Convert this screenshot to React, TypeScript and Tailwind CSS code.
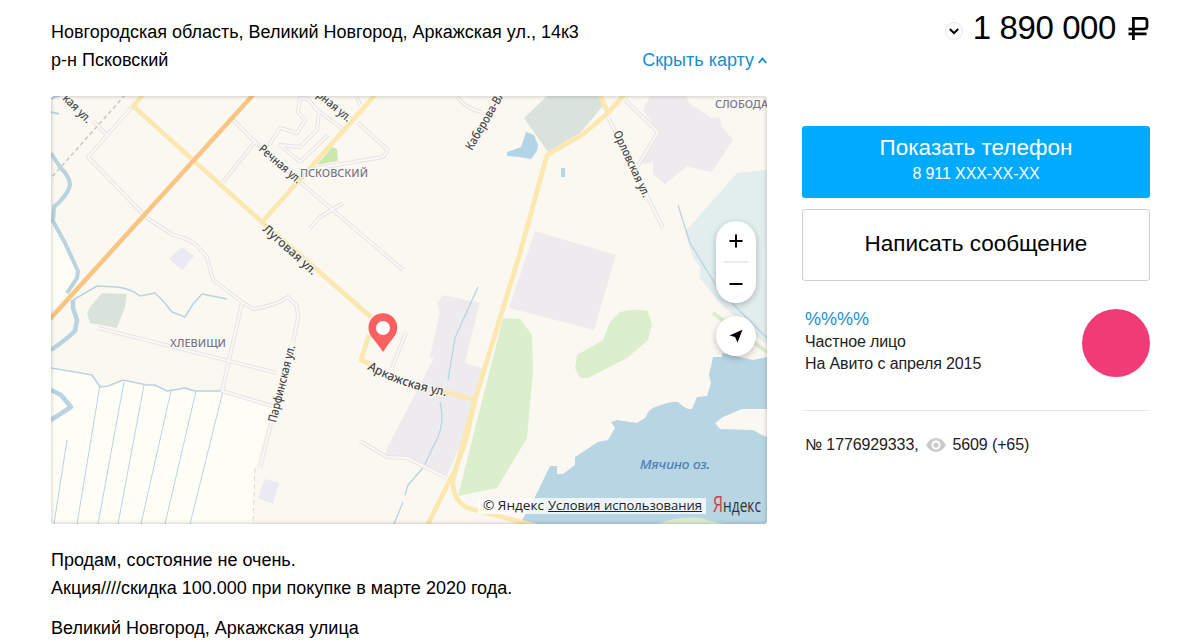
import type { ReactNode } from 'react';

const fieldDitches = [
  'M67 440 54 524',
  'M100 385 77 524',
  'M124 382 98 524',
  'M144 385 118 524',
  'M171 391 141 524',
  'M196 391 165 524',
  'M223 391 190 524',
];

const smallRoads = [
  'M131 108 88 157 147 218 173 235 Q190 239 196 245 L207 257 213 280 242 302 253 309 Q275 306 288 297 L297 306 298 318 293 342',
  'M107 135 93 121',
  'M233 120 255 142 223 182',
  'M255 142 300 182 403 270',
  'M269 145 280 128 297 133 305 120 298 112 300 98 308 99 319 112 317 130 300 147 280 145 300 162',
  'M300 162 328 135',
  'M313 107 347 132',
  'M358 123 388 150 383 157 313 169',
  'M343 203 320 217 310 228',
  'M457 97 Q466 109 482 112',
  'M357 97 360 105',
  'M98 328 277 373',
  'M242 303 222 391 272 406',
  'M271 423 260 468',
  'M406 332 392 368',
  'M360 441 387 457 407 458 447 478',
  'M625 100 658 132 637 167',
  'M608 117 663 228',
];

const majorRoads = [
  'M143 95 133 106 262 222 375 95',
  'M262 222 371 317',
  'M369 335 361 360 372 365',
  'M442 391 475 400',
  'M600 95 608 113',
  'M624 95 608 113 582 135 547 155 520 253 504 305 475 400 466 440 455 470 428 524',
  'M475 400 453 480 Q452 500 468 508 L536 526',
];

function MapLabel({ x, y, angle = 0, width, children }: { x: number; y: number; angle?: number; width: number; children: ReactNode }) {
  return (
    <text
      transform={`translate(${x} ${y}) rotate(${angle})`}
      textLength={width}
      lengthAdjust="spacingAndGlyphs"
      fill="#454547"
      stroke="#fdfbf5"
      strokeWidth="2"
      paintOrder="stroke"
    >
      {children}
    </text>
  );
}

function CityMap() {
  return (
    <svg viewBox="51 96 716 428" className="block h-full w-full font-['Noto_Sans',sans-serif] text-[12px] font-medium">
      <rect x="51" y="96" width="716" height="428" fill="#fbf8f1" />

      {/* fields */}
      <g fill="#fefef7">
        <path d="M51 368 92 375 100 387 123 380 147 385 167 390 223 391 272 406 255 468 253 524H51Z" />
        <path d="M51 207 65 243 78 272 67 293 51 312Z" />
      </g>

      {/* built-up areas */}
      <g fill="#eeebef">
        <path d="m182 247 12 9-12 14-13-11Z" fill="#ebe9f1" />
        <path d="m265 479 14 4-6 21-15-6Z" fill="#ebe9f1" />
        <path d="m443 295 37 8-15 60 17 5-12 55-24 55-39-20-20-1-1-7 48-92-4-1 10-45-3-8Z" />
        <path d="m535 231 81 24-22 75-85-22Z" />
        <path d="M650 96h36l4 8 22 14 8-1 1 8 12 15-21 32-14-3-11-3-22 18-12-10v-12l-13 2 18-32-15-22Z" />
      </g>

      {/* greenery */}
      <g fill="#d9e3db">
        <path d="m90 307 12-14 25 1-2 13-8 21-27-5-3-10Z" />
        <path d="M547 96h53l2 11-22 26-32 19-24-34Z" />
      </g>
      <g fill="#dcefcd">
        <path d="m503 318 17 1 12 16 1 37-6 66-30 50-39 8Z" />
        <path d="m610 322 10-10q14-4 28-1l4 14-4 15-21 18-39 20h-8l-5-10 2-13 26-15Z" />
        <path d="m317 165 15-18 5 2 1 12Z" fill="#cae8ae" />
      </g>

      {/* marsh by the lake */}
      <path d="m767 170-30 3-52 59 8 25 7 10v11l20 25 47 42Z" fill="#e1eeed" />
      <path d="m713 313 54 39" fill="none" stroke="#dcebce" strokeWidth="4" />

      {/* lake */}
      <path
        d="M713 357h9v-4l31 7 14-3v167H520l18-33 12-25h7v8h6l12-9v-8l23-15 10-2 7-12-4-6 6-2 20 3 8-5q4-9 10-11 17-6 23-5 8 8 14 7l5-12 10-1 4-13-2-8Z"
        fill="#b7d5e3"
      />
      <path d="m715 423 8-6 19-8h25v28l-5-2-9-5-33-1Z" fill="#fbf8f1" />
      <path d="M657 524q20-8 43-6l23 6Z" fill="#dcebce" />
      <path d="m526 132 8 3 4 10-1 6-6 8-12-2-12-1v-4l14-5Z" fill="#b1d4e6" />
      <path d="M561 168h4v9h-4Z" fill="#b7d5e3" />

      {/* rivers and streams */}
      <g fill="none" stroke="#b9d4e0" strokeLinejoin="round">
        <path d="M51 99q4-3 9-3M51 112l8 2" strokeWidth="2" />
        <path d="M51 153 60 167Q70 177 70 185 68 195 54 207L53 221 65 243 78 271 77 278 67 293" strokeWidth="4" />
        <path d="M73 300V308L77 320 75 331Q67 339 51 350M51 390 61 395 71 407 51 420" strokeWidth="4.5" />
        <path d="M73 300 97 286 117 287Q132 289 140 296L155 293Q162 299 168 307L172 312 185 317 193 304 202 294 227 299" strokeWidth="1.5" />
        <path d="M51 368 75 372 92 375 100 387 108 386 123 380 147 385 155 385 167 391 185 388 195 391 223 391" strokeWidth="1.5" />
        {fieldDitches.map((d) => (
          <path key={d} d={d} strokeWidth="1" />
        ))}
        <path d="M478 287 455 338 448 380M440 402Q445 422 437 439L423 468 408 485 405 495M403 502 394 524" strokeWidth="1.3" />
        <path d="M678 205 690 243 717 287 737 308 767 338" strokeWidth="1.3" />
      </g>

      {/* roads */}
      <g fill="none" strokeLinejoin="round">
        <g stroke="#e5e3e4" strokeWidth="4">
          {smallRoads.map((d) => (
            <path key={d} d={d} />
          ))}
        </g>
        <g stroke="#fbf9f6" strokeWidth="2">
          {smallRoads.map((d) => (
            <path key={d} d={d} />
          ))}
        </g>
        <path d="M255 468 253 524" stroke="#dedcda" strokeDasharray="5 3" />
        <path d="M125 95 51 178" stroke="#c8c5c3" strokeWidth="1.5" strokeDasharray="4 3" />
        <g stroke="#fbe8b0" strokeWidth="4.8">
          {majorRoads.map((d) => (
            <path key={d} d={d} />
          ))}
        </g>
        <path d="M253 95 50 319" stroke="#f8c583" strokeWidth="4.5" />
      </g>

      {/* street names */}
      <MapLabel x={62} y={99} angle={45} width={35}>кая ул.</MapLabel>
      <MapLabel x={316} y={96} angle={40} width={41}>рная ул.</MapLabel>
      <MapLabel x={258} y={150} angle={41} width={52}>Речная ул.</MapLabel>
      <MapLabel x={262} y={230} angle={42} width={68}>Луговая ул.</MapLabel>
      <MapLabel x={472} y={151} angle={-60} width={66}>Каберова-Вл</MapLabel>
      <MapLabel x={613} y={133} angle={65} width={72}>Орловская ул.</MapLabel>
      <MapLabel x={276} y={423} angle={-76} width={79}>Парфинская ул.</MapLabel>
      <path id="arkazhskaya" d="M367 369Q400 388 450 397" fill="none" />
      <text fill="#454547" stroke="#fdfbf5" strokeWidth="2" paintOrder="stroke" fontSize="12.5">
        <textPath href="#arkazhskaya" textLength="84" lengthAdjust="spacingAndGlyphs">Аркажская ул.</textPath>
      </text>

      {/* districts */}
      <g fill="#77748a" stroke="#fdfbf5" strokeWidth="2" paintOrder="stroke" fontSize="11.5">
        <text x="300" y="177" textLength="68" lengthAdjust="spacingAndGlyphs">ПСКОВСКИЙ</text>
        <text x="170" y="347" textLength="56" lengthAdjust="spacingAndGlyphs">ХЛЕВИЩИ</text>
        <text x="715" y="108" textLength="53" lengthAdjust="spacingAndGlyphs">СЛОБОДА</text>
      </g>
      <text x="640" y="469" textLength="70" lengthAdjust="spacingAndGlyphs" className="font-normal italic" fill="#4c7fb8" stroke="#4c7fb8" strokeWidth="0.2" fontSize="13.5">
        Мячино оз.
      </text>

      {/* placemark */}
      <path d="M383 352Q377 343 372 337.500 368.500 333 368.500 327.500A14.300 14.300 0 0 1 397.200 327.500Q397.200 333 393.500 337.500 388 344 383 352Z" fill="#fb5f60" />
      <circle cx="383" cy="328" r="7" fill="#fff" />
    </svg>
  );
}

function MapControls() {
  return (
    <div className="absolute top-[125px] right-[11px] flex w-10 flex-col gap-[13px]">
      <div className="flex h-[82px] flex-col items-center justify-between rounded-full bg-white py-[13px] shadow-[0_2px_6px_rgba(0,0,0,0.25)]">
        <svg width="14" height="14" viewBox="0 0 14 14" stroke="#000" strokeWidth="2">
          <path d="M0.500 7h13M7 0.500v13" />
        </svg>
        <div className="h-0.5 w-6 bg-[#ebebeb]" />
        <svg width="14" height="14" viewBox="0 0 14 14" stroke="#000" strokeWidth="2">
          <path d="M0.500 8h13" />
        </svg>
      </div>
      <div className="flex h-10 items-center justify-center rounded-full bg-white shadow-[0_2px_6px_rgba(0,0,0,0.25)]">
        <svg width="14" height="14" viewBox="0 0 14 14">
          <path d="M13.500 0.800 0.500 6.500 6 8 8.500 13.500Z" />
        </svg>
      </div>
    </div>
  );
}

function MapFooter() {
  return (
    <div className="absolute right-1.5 bottom-[7px] flex h-[22px] items-center gap-[7px]">
      <div className="flex h-4 w-[228px] items-center bg-white/75 font-['Open_Sans','Noto_Sans',sans-serif]">
        <svg width="228" height="16" viewBox="0 0 228 16" fontSize="12.500" fill="#222">
          <text x="5" y="11.500" textLength="61" lengthAdjust="spacingAndGlyphs">© Яндекс</text>
          <text x="70" y="11.500" textLength="154" lengthAdjust="spacingAndGlyphs">Условия использования</text>
          <path d="M70 13.500h154" stroke="#222" />
        </svg>
      </div>
      <svg width="48" height="22" viewBox="0 0 48 22" fontWeight="500" className="font-['Open_Sans','Noto_Sans',sans-serif]">
        <text x="0" y="17" fontSize="18" fill="#333" textLength="48" lengthAdjust="spacingAndGlyphs">
          <tspan fontSize="21" fill="#d63e45">Я</tspan>ндекс
        </text>
      </svg>
    </div>
  );
}

function Listing() {
  return (
    <main className="w-[716px] pt-[18px] text-lg leading-7 text-black">
      <div className="flex items-end justify-between">
        <div>
          <p>Новгородская область, Великий Новгород, Аркажская ул., 14к3</p>
          <p>р-н Псковский</p>
        </div>
        <a className="flex items-center gap-1 text-[#148fcf]">
          Скрыть карту
          <svg width="9" height="7" viewBox="0 0 9 7" fill="none" stroke="currentColor" strokeWidth="1.800">
            <path d="M0.700 6 4.500 1.500 8.300 6" />
          </svg>
        </a>
      </div>

      <div className="relative mt-[22px] h-[428px] overflow-hidden rounded-[3px]">
        <CityMap />
        <div className="absolute inset-0 rounded-[3px] shadow-[inset_0_0_4px_rgba(0,0,0,0.25)]" />
        <MapControls />
        <MapFooter />
      </div>

      <div className="mt-[22px]">
        <p>Продам, состояние не очень.</p>
        <p>Акция////скидка 100.000 при покупке в марте 2020 года.</p>
        <p className="mt-3">Великий Новгород, Аркажская улица</p>
      </div>
    </main>
  );
}

function Sidebar() {
  return (
    <aside className="w-[348px] text-black">
      <div className="flex h-[126px] items-start justify-end pt-[7px]">
        <div className="flex h-10 items-center">
          <div className="mt-2 mr-2.5 flex size-[18px] items-center justify-center rounded-full border border-[#e6e6e6]">
            <svg width="10" height="7" viewBox="0 0 10 7" fill="none" stroke="#000" strokeWidth="2">
              <path d="M0.800 1 5 5.200 9.200 1" />
            </svg>
          </div>
          <span className="pt-px text-[33px] leading-10 tracking-[-0.4px]">1 890 000</span>
          <svg width="22" height="24" viewBox="0 0 22 24" fill="none" stroke="#000" strokeWidth="2.700" className="mt-px ml-3">
            <path d="M5.400 24V2.300H16Q19 2.300 19 5V10.300Q19 13 16 13H0.500M0.500 17.800H18.500" />
          </svg>
        </div>
      </div>

      <button className="flex h-[72px] w-full flex-col items-center rounded-[3px] bg-[#00aaff] pt-2 text-white">
        <span className="text-[22.500px] leading-7">Показать телефон</span>
        <span className="text-base leading-6 tracking-[-0.1px]">8 911 XXX-XX-XX</span>
      </button>
      <button className="mt-[11px] flex h-[72px] w-full items-center justify-center rounded-[3px] border border-[#cfcfcf] bg-white pb-0.5 text-[22.500px]">
        Написать сообщение
      </button>

      <div className="mt-[27px] flex h-[103px] justify-between border-b border-[#e8e8e8] pl-[3px] text-base leading-[22px] tracking-[-0.12px] text-[#222]">
        <div>
          <a className="block text-lg leading-[23px] tracking-normal text-[#148fcf]">%%%%</a>
          <p>Частное лицо</p>
          <p>На Авито с апреля 2015</p>
        </div>
        <div className="mt-px size-[68px] rounded-full bg-[#f03b76]" />
      </div>

      <div className="mt-[23px] flex items-center pl-[3px] text-base leading-[22px] tracking-[-0.12px] text-[#222]">
        <span>№ 1776929333,</span>
        <svg width="20" height="14" viewBox="0 0 20 14" className="mr-1.5 ml-2">
          <path d="M0 7Q4 0 10 0T20 7Q16 14 10 14T0 7Z" fill="#cbcbcb" />
          <circle cx="10" cy="7" r="4.500" fill="#fff" />
          <circle cx="10" cy="7" r="2.600" fill="#cbcbcb" />
        </svg>
        <span>5609 (+65)</span>
      </div>
    </aside>
  );
}

export default function App() {
  return (
    <div className="flex h-[642px] w-[1179px] gap-[35px] overflow-hidden bg-white pl-[51px] font-['Liberation_Sans',Arial,sans-serif]">
      <Listing />
      <Sidebar />
    </div>
  );
}
